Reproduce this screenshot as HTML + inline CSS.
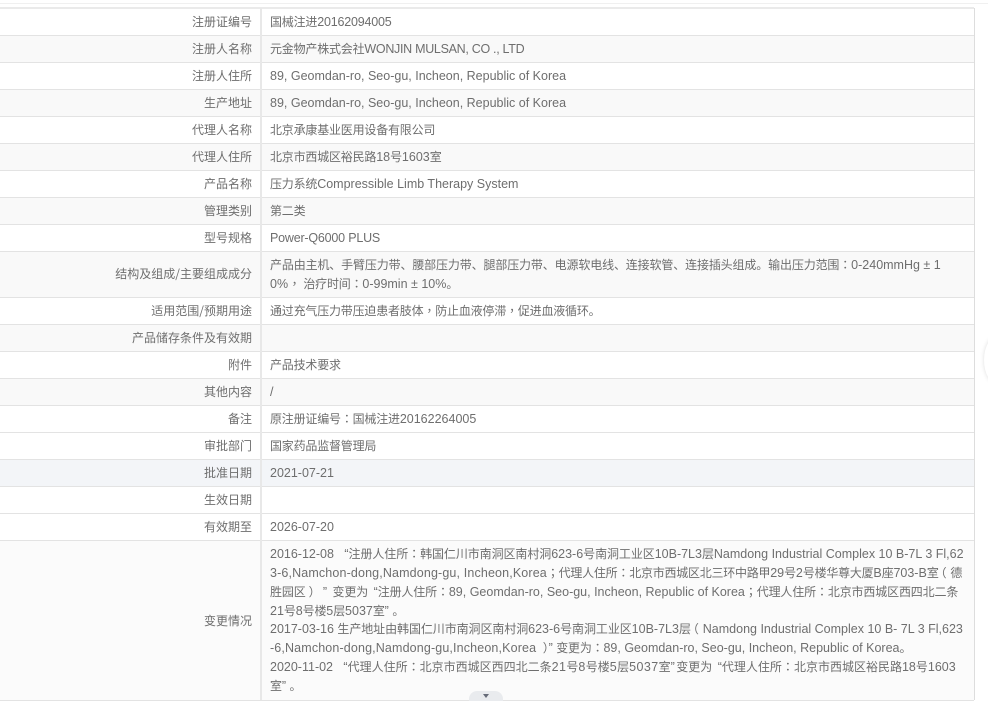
<!DOCTYPE html>
<html><head><meta charset="utf-8">
<style>
html,body{margin:0;padding:0;width:988px;height:708px;overflow:hidden;background:#fff}
body{position:relative;font:12px/18px "Liberation Sans","Noto Sans CJK SC",sans-serif;color:#666}
.r{position:absolute;left:0;width:974px;border-bottom:1px solid #e3e3e3;box-sizing:border-box}
.e{background:#f9f9f9}
.l{position:absolute;right:736px;white-space:nowrap;font-family:"Noto Sans CJK SC",sans-serif;color:#6e6e6e}
.t{position:absolute;left:270px;white-space:nowrap;font-family:"Noto Sans CJK SC",sans-serif;color:#6e6e6e;letter-spacing:-.2px}
.t i{font:normal 12.5px/18px "Liberation Sans",sans-serif;letter-spacing:0}
.t b{font:normal 12px/18px "Noto Sans CJK TC",sans-serif;letter-spacing:inherit}
.t u{text-decoration:none;position:relative;left:-4px}
.t s{text-decoration:none;position:relative;left:3px}
#v{position:absolute;left:260px;top:8px;width:2px;height:692px;background:#e8e8e8}
#rb{position:absolute;left:974px;top:8px;width:1px;height:692px;background:#ddd}
#w{position:absolute;left:0;top:0;width:988px;height:708px;filter:blur(.3px)}
</style></head><body><div id="w">
<div style="position:absolute;left:0;top:3px;width:988px;height:1px;background:#f0f0f0"></div>
<div style="position:absolute;left:0;top:7px;width:974px;height:2px;background:#eaeaea"></div>

<div class="r" style="top:9px;height:27px"></div>
<div class="r e" style="top:36px;height:27px"></div>
<div class="r" style="top:63px;height:27px"></div>
<div class="r e" style="top:90px;height:27px"></div>
<div class="r" style="top:117px;height:27px"></div>
<div class="r e" style="top:144px;height:27px"></div>
<div class="r" style="top:171px;height:27px"></div>
<div class="r e" style="top:198px;height:27px"></div>
<div class="r" style="top:225px;height:27px"></div>
<div class="r e" style="top:252px;height:46px"></div>
<div class="r" style="top:298px;height:27px"></div>
<div class="r e" style="top:325px;height:27px"></div>
<div class="r" style="top:352px;height:27px"></div>
<div class="r e" style="top:379px;height:27px"></div>
<div class="r" style="top:406px;height:27px"></div>
<div class="r" style="top:433px;height:27px"></div>
<div class="r" style="top:460px;height:27px;background:#f3f5f8"></div>
<div class="r" style="top:487px;height:27px"></div>
<div class="r" style="top:514px;height:27px"></div>
<div class="r" style="top:541px;height:160px;background:#fbfbfb"></div>
<div id="v"></div><div id="rb"></div>

<div class="l" style="top:13px">注册证编号</div><div class="t" style="top:13px">国械注进<i style="letter-spacing:-.2px">20162094005</i></div>
<div class="l" style="top:40px">注册人名称</div><div class="t" style="top:40px">元金物产株式会社<i style="letter-spacing:-.3px">WONJIN MULSAN, CO ., LTD</i></div>
<div class="l" style="top:67px">注册人住所</div><div class="t" style="top:67px"><i>89, Geomdan-ro, Seo-gu, Incheon, Republic of Korea</i></div>
<div class="l" style="top:94px">生产地址</div><div class="t" style="top:94px"><i>89, Geomdan-ro, Seo-gu, Incheon, Republic of Korea</i></div>
<div class="l" style="top:121px">代理人名称</div><div class="t" style="top:121px">北京承康基业医用设备有限公司</div>
<div class="l" style="top:148px">代理人住所</div><div class="t" style="top:148px">北京市西城区裕民路<i>18</i>号<i>1603</i>室</div>
<div class="l" style="top:175px">产品名称</div><div class="t" style="top:175px">压力系统<i>Compressible Limb Therapy System</i></div>
<div class="l" style="top:202px">管理类别</div><div class="t" style="top:202px">第二类</div>
<div class="l" style="top:229px">型号规格</div><div class="t" style="top:229px"><i style="letter-spacing:-.2px">Power-Q6000 PLUS</i></div>
<div class="l" style="top:265px">结构及组成/主要组成成分</div>
<div class="t" style="top:256px;letter-spacing:-.14px">产品由主机、手臂压力带、腰部压力带、腿部压力带、电源软电线、连接软管、连接插头组成。输出压力范围<b>：</b><i>0-240mmHg ± 1</i></div>
<div class="t" style="top:275px"><i>0% </i><b style="position:relative;left:-3px">，</b>治疗时间<b>：</b><i>0-99min ± 10%</i>。</div>
<div class="l" style="top:302px">适用范围/预期用途</div><div class="t" style="top:302px">通过充气压力带压迫患者肢体<b>，</b>防止血液停滞<b>，</b>促进血液循环。</div>
<div class="l" style="top:329px">产品储存条件及有效期</div>
<div class="l" style="top:356px">附件</div><div class="t" style="top:356px">产品技术要求</div>
<div class="l" style="top:383px">其他内容</div><div class="t" style="top:383px"><i>/</i></div>
<div class="l" style="top:410px">备注</div><div class="t" style="top:410px">原注册证编号<b>：</b>国械注进<i>20162264005</i></div>
<div class="l" style="top:437px">审批部门</div><div class="t" style="top:437px">国家药品监督管理局</div>
<div class="l" style="top:464px">批准日期</div><div class="t" style="top:464px"><i>2021-07-21</i></div>
<div class="l" style="top:491px">生效日期</div>
<div class="l" style="top:518px">有效期至</div><div class="t" style="top:518px"><i>2026-07-20</i></div>
<div class="l" style="top:612px">变更情况</div>
<div class="t" style="top:545px;letter-spacing:-.08px"><i>2016-12-08&nbsp;&nbsp;&nbsp;“</i>注册人住所<b>：</b>韩国仁川市南洞区南村洞<i>623-6</i>号南洞工业区<i>10B-7L3</i>层<i>Namdong Industrial Complex 10 B-7L 3 Fl,62</i></div>
<div class="t" style="top:564px;letter-spacing:-.25px"><i style="letter-spacing:.14px">3-6,Namchon-dong,Namdong-gu, Incheon,Korea</i><b>；</b>代理人住所<b>：</b>北京市西城区北三环中路甲<i>29</i>号<i>2</i>号楼华尊大厦<i>B</i>座<i>703-B</i>室<u>（</u>德</div>
<div class="t" style="top:583px;letter-spacing:-.15px">胜园区<s>）</s><i style="margin:0 2px">&nbsp;”&nbsp;</i>变更为<i style="margin-left:2px">&nbsp;“</i>注册人住所<b>：</b><i>89, Geomdan-ro, Seo-gu, Incheon, Republic of Korea</i><b>；</b>代理人住所<b>：</b>北京市西城区西四北二条</div>
<div class="t" style="top:602px"><i>21</i>号<i>8</i>号楼<i>5</i>层<i>5037</i>室<i>”&nbsp;</i>。</div>
<div class="t" style="top:620px;letter-spacing:-.08px"><i>2017-03-16 </i>生产地址由韩国仁川市南洞区南村洞<i>623-6</i>号南洞工业区<i>10B-7L3</i>层<u>（</u><i>Namdong Industrial Complex 10 B- 7L 3 Fl,623</i></div>
<div class="t" style="top:639px"><i style="letter-spacing:.14px">-6,Namchon-dong,Namdong-gu,Incheon,Korea&nbsp;</i><s>）</s><i style="margin-left:3px">”&nbsp;</i>变更为<b>：</b><i>89, Geomdan-ro, Seo-gu, Incheon, Republic of Korea</i>。</div>
<div class="t" style="top:658px;letter-spacing:0"><i>2020-11-02&nbsp;&nbsp;&nbsp;“</i>代理人住所<b>：</b>北京市西城区西四北二条<i style="letter-spacing:.4px">21</i>号<i style="letter-spacing:.4px">8</i>号楼<i style="letter-spacing:.4px">5</i>层<i style="letter-spacing:.4px">5037</i>室<i style="margin-right:1.5px">”</i>变更为<i style="margin-left:2px">&nbsp;“</i>代理人住所<b>：</b>北京市西城区裕民路<i>18</i>号<i>1603</i></div>
<div class="t" style="top:677px">室<i>”&nbsp;</i>。</div>

<div style="position:absolute;left:469px;top:691px;width:34px;height:10px;background:#e9ebee;border-radius:8px 8px 0 0"></div>
<div style="position:absolute;left:483px;top:694px;width:0;height:0;border-left:3px solid transparent;border-right:3px solid transparent;border-top:4px solid #666b78"></div>
<div style="position:absolute;left:984px;top:335px;width:30px;height:50px;border-radius:50%;background:#fff;box-shadow:0 0 4px #ddd"></div>
</div></body></html>
